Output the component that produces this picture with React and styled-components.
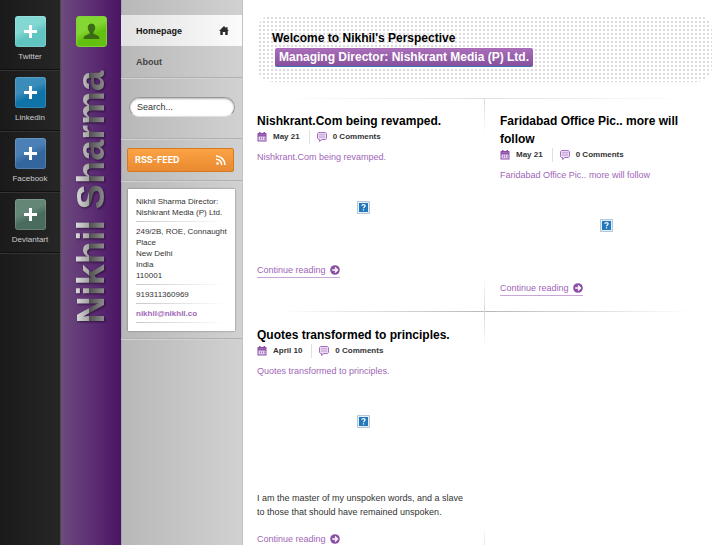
import styled, { createGlobalStyle } from 'styled-components'

const socialLinks = [
  { name: 'Twitter', from: '#83d8d4', to: '#60c4c0' },
  { name: 'Linkedin', from: '#3a8cba', to: '#0f73a8' },
  { name: 'Facebook', from: '#4a80b6', to: '#34669e' },
  { name: 'Deviantart', from: '#648676', to: '#4a6c5e' },
]

const posts = [
  { title: 'Nishkrant.Com being revamped.', date: 'May 21' },
  { title: 'Faridabad Office Pic.. more will follow', date: 'May 21' },
  {
    title: 'Quotes transformed to principles.',
    date: 'April 10',
    text: 'I am the master of my unspoken words, and a slave to those that should have remained unspoken.',
  },
]

export default function App() {
  return (
    <>
      <GlobalStyle />
      <Page>
        <SocialBar>
          {socialLinks.map((link) => (
            <SocialLink href="#" key={link.name}>
              <SocialTile $from={link.from} $to={link.to}>
                <PlusIcon />
              </SocialTile>
              {link.name}
            </SocialLink>
          ))}
        </SocialBar>

        <BrandBar>
          <UserButton type="button" aria-label="Profile">
            <UserIcon />
          </UserButton>
          <BrandName>Nikhil Sharma</BrandName>
        </BrandBar>

        <Sidebar>
          <Menu>
            <MenuLink href="#" $active>
              Homepage
              <HomeIcon />
            </MenuLink>
            <MenuLink href="#">About</MenuLink>
          </Menu>
          <SearchForm>
            <SearchInput
              type="text"
              aria-label="Search"
              defaultValue="Search..."
            />
          </SearchForm>
          <RssSection>
            <RssLink href="#">
              RSS-FEED
              <RssIcon />
            </RssLink>
          </RssSection>
          <ContactSection>
            <ContactCard>
              <ContactItem>
                Nikhil Sharma Director: Nishkrant Media (P) Ltd.
              </ContactItem>
              <ContactItem>
                249/2B, ROE, Connaught Place
                <br />
                New Delhi
                <br />
                India
                <br />
                110001
              </ContactItem>
              <ContactItem>919311360969</ContactItem>
              <ContactItem>
                <MailLink href="mailto:nikhil@nikhil.co">
                  nikhil@nikhil.co
                </MailLink>
              </ContactItem>
            </ContactCard>
          </ContactSection>
        </Sidebar>

        <Main>
          <Banner>
            <BannerTitle>Welcome to Nikhil's Perspective</BannerTitle>
            <BannerTag>Managing Director: Nishkrant Media (P) Ltd.</BannerTag>
          </Banner>
          <PostGrid>
            {posts.map((post) => (
              <Post key={post.title}>
                <PostTitle>{post.title}</PostTitle>
                <PostMeta>
                  <MetaItem>
                    <CalendarIcon />
                    {post.date}
                  </MetaItem>
                  <MetaItem>
                    <CommentIcon />0 Comments
                  </MetaItem>
                </PostMeta>
                <Excerpt href="#">{post.title}</Excerpt>
                <Picture>
                  <MissingImageIcon />
                </Picture>
                {post.text && <PostText>{post.text}</PostText>}
                <MoreLink href="#">
                  Continue reading
                  <ArrowIcon />
                </MoreLink>
              </Post>
            ))}
          </PostGrid>
        </Main>
      </Page>
    </>
  )
}

function PlusIcon() {
  return (
    <svg width="13" height="13" viewBox="0 0 13 13" aria-hidden="true">
      <path d="M5 0h3v5h5v3H8v5H5V8H0V5h5z" fill="#fff" />
    </svg>
  )
}

function UserIcon() {
  return (
    <svg width="17" height="17" viewBox="0 0 17 17" aria-hidden="true">
      <path
        d="M8.500 1C6.200 1 5.200 2.500 5.200 4.500c0 1.800.7 3.500 1.800 4.400v1.500C6.500 12 1.500 12.200 1 14.500V15.500h15v-1c-.5-2.300-5.500-2.500-6-4.100V8.900c1.100-.9 1.800-2.600 1.800-4.400C11.800 2.500 10.800 1 8.500 1z"
        fill="#3d6b14"
        stroke="#2c5510"
        strokeWidth=".6"
      />
    </svg>
  )
}

function HomeIcon() {
  return (
    <svg width="10" height="9" viewBox="0 0 10 9" aria-hidden="true">
      <path
        d="M5 0 0 5h1.300v4h2.500V6h2.400v3h2.500V5H10L8.500 3.500V1H7.200v1.200z"
        fill="#2b2b2b"
      />
    </svg>
  )
}

function RssIcon() {
  return (
    <svg width="10" height="10" viewBox="0 0 10 10" aria-hidden="true">
      <circle cx="1.500" cy="8.500" r="1.300" fill="#fff" />
      <path
        d="M0 4.200A5.800 5.800 0 0 1 5.800 10M0 1a9 9 0 0 1 9 9"
        fill="none"
        stroke="#fff"
        strokeWidth="1.500"
      />
    </svg>
  )
}

function CalendarIcon() {
  return (
    <svg width="10" height="10" viewBox="0 0 10 10" aria-hidden="true">
      <path
        d="M1 1h1V0h1.500v1h3V0H8v1h1l.5.500V9.500h-9v-8z"
        fill="#8a4fa5"
      />
      <path d="M1.500 4.500h7v4h-7z" fill="#e6d5ef" />
      <path d="M3 5.500h1v2H3zM5 5.500h1v2H5zM7 5.500h.8v2H7z" fill="#a873c0" />
      <path d="M1.500 2.800h7" stroke="#b88acb" strokeWidth=".6" />
    </svg>
  )
}

function CommentIcon() {
  return (
    <svg width="10" height="10" viewBox="0 0 10 10" aria-hidden="true">
      <path
        d="M1.500.5h7l1 1v5l-1 1H5L2.500 9.500v-2h-1l-1-1v-5z"
        fill="#ead9f2"
        stroke="#a56fc0"
      />
      <path d="M2 2.800h6M2 5h6" stroke="#b58acb" strokeWidth=".8" />
    </svg>
  )
}

function ArrowIcon() {
  return (
    <svg width="10" height="10" viewBox="0 0 10 10" aria-hidden="true">
      <circle cx="5" cy="5" r="4.800" fill="#8a4fa5" />
      <path
        d="M2.200 5h4.800M5 2.600 7.400 5 5 7.400"
        fill="none"
        stroke="#fff"
        strokeWidth="1.400"
      />
    </svg>
  )
}

function MissingImageIcon() {
  return (
    <svg width="13" height="13" viewBox="0 0 13 13" role="img">
      <path d="M.5.500h12v12H.5z" fill="#e6eef6" stroke="#b4c6d8" />
      <path d="M2 2h9v9H2z" fill="#2279bd" />
      <path
        d="M4.800 4.800c0-1.600 3.400-1.600 3.400 0C8.200 6 6.500 5.800 6.500 7.300M6.500 8.300v1.200"
        fill="none"
        stroke="#fff"
        strokeWidth="1.200"
      />
    </svg>
  )
}

const purple = '#a066b8'

const GlobalStyle = createGlobalStyle`
  * {
    box-sizing: border-box;
  }
  body {
    margin: 0;
    background: #ffffff;
    color: #333333;
    font: 9px/14px 'Liberation Sans', Arial, sans-serif;
  }
  a {
    color: inherit;
    text-decoration: none;
  }
  svg {
    display: block;
    flex: none;
  }
`

const Page = styled.div`
  display: grid;
  grid-template-columns: 61px 60px 122px 1fr;
  min-height: 100vh;
`

const SocialBar = styled.nav`
  padding-top: 10px;
  background: linear-gradient(90deg, #1a1a1a, #262626);
  border-right: 1px solid #4a4a4a;
`

const SocialLink = styled.a`
  display: flex;
  flex-direction: column;
  align-items: center;
  height: 61px;
  padding-top: 6px;
  border-bottom: 1px solid #333333;
  box-shadow: inset 0 -1px 0 #101010;
  color: #cccccc;
  font-size: 8px;
  line-height: 20px;
`

const SocialTile = styled.span`
  display: grid;
  place-items: center;
  width: 31px;
  height: 31px;
  border-radius: 3px;
  background: linear-gradient(
    155deg,
    ${(props) => props.$from} 40%,
    ${(props) => props.$to} 60%
  );
  box-shadow: inset 0 0 0 1px rgba(255, 255, 255, 0.15);
`

const BrandBar = styled.header`
  display: flex;
  flex-direction: column;
  align-items: center;
  padding-top: 16px;
  background: linear-gradient(90deg, #6c4b7c, #5d2f74 50%, #4a1463);
`

const UserButton = styled.button`
  display: grid;
  place-items: center;
  width: 31px;
  height: 31px;
  margin-bottom: 23px;
  padding: 0;
  border: 1px solid #7fd13a;
  border-radius: 3px;
  background: linear-gradient(155deg, #84d632 40%, #64c00e 60%);
  cursor: pointer;
`

/* reads bottom to top, so the gradient runs right to left */
const BrandName = styled.div`
  writing-mode: vertical-rl;
  transform: rotate(180deg);
  background: linear-gradient(
    90deg,
    #949494 16%,
    #505050 54%,
    #a2a2a2 54%,
    #dcdcdc 85%
  );
  background-clip: text;
  color: transparent;
  filter: drop-shadow(-1px -1px 1px rgba(20, 0, 30, 0.6));
  font-size: 38px;
  font-weight: bold;
  line-height: 44px;
  white-space: nowrap;
`

const Sidebar = styled.aside`
  background: linear-gradient(90deg, #b8b8b8, #d1d1d1);
  border-right: 1px solid #c2c2c2;
  box-shadow: inset 1px 0 0 #a5a5a5;
`

const SideSection = styled.div`
  border-bottom: 1px solid #b0b0b0;
  box-shadow: 0 1px 0 #d2d2d2;
`

const Menu = styled(SideSection).attrs({ as: 'nav' })`
  padding-top: 15px;
`

const MenuLink = styled.a`
  display: flex;
  align-items: center;
  justify-content: space-between;
  height: 31px;
  padding: 0 13px 0 15px;
  background: ${(props) =>
    props.$active ? 'linear-gradient(90deg, #e2e2e2, #fbfbfb)' : 'none'};
  color: ${(props) => (props.$active ? '#111111' : '#444444')};
  font-weight: bold;
`

const SearchForm = styled(SideSection).attrs({ as: 'form' })`
  padding: 19px 7px 21px 8px;
`

const SearchInput = styled.input`
  display: block;
  width: 100%;
  height: 20px;
  padding: 0 7px;
  border: 1px solid #999999;
  border-bottom-color: #e0e0e0;
  border-radius: 10px;
  background: #ffffff;
  box-shadow: inset 0 1px 2px rgba(0, 0, 0, 0.3);
  color: #333333;
  font: inherit;
`

const RssSection = styled(SideSection)`
  padding: 9px 8px 8px 6px;
`

const RssLink = styled.a`
  display: flex;
  align-items: center;
  justify-content: space-between;
  height: 24px;
  padding: 0 7px;
  border: 1px solid #d27a24;
  border-radius: 2px;
  background: linear-gradient(#fba345, #e98a30);
  color: #ffffff;
  font-family: Inter, sans-serif;
  font-weight: bold;
`

const ContactSection = styled(SideSection)`
  padding: 8px 7px 7px;
`

const ContactCard = styled.address`
  padding: 7px 0 8px 8px;
  background: #ffffff;
  box-shadow: 0 0 2px rgba(0, 0, 0, 0.4);
  font-size: 8px;
  font-style: normal;
  line-height: 11px;
`

const ContactItem = styled.div`
  padding: 0 0 3px;
  margin-bottom: 4px;
  border-bottom: 1px solid;
  border-image: linear-gradient(90deg, #c8c8c8, #ffffff 90%) 1;

  &:last-child {
    margin-bottom: 0;
  }
`

const MailLink = styled.a`
  color: ${purple};
  font-weight: bold;
`

const Main = styled.main`
  min-width: 0;
`

const Banner = styled.section`
  margin: 15px 15px 16px 14px;
  padding: 14px 15px 15px;
  border-radius: 16px;
  background: conic-gradient(#ffffff 25%, #dcdadc 0 50%, #ffffff 0) 0 0 / 4px
    4px;
  font-size: 12px;
  font-weight: bold;
  line-height: 18px;
`

const BannerTitle = styled.h1`
  margin: 0 0 1px;
  color: #000000;
  font: inherit;
`

const BannerTag = styled.span`
  display: block;
  width: fit-content;
  margin-left: 3px;
  padding: 0 4px;
  border-bottom: 1px solid #3f72b0;
  border-radius: 2px;
  background: linear-gradient(#ab6fba, #86509c);
  color: #ffffff;
`

const PostGrid = styled.div`
  display: grid;
  grid-template-columns: 1fr 1fr;
`

/* hairlines fade out away from the corners where cells meet */
const Post = styled.article`
  padding: 14px 15px 16px 14px;
  background:
    linear-gradient(#d8d8d8, transparent) 100% 0 / 1px 36px no-repeat,
    linear-gradient(transparent, #d8d8d8) 100% 100% / 1px 36px no-repeat,
    linear-gradient(90deg, transparent 15%, #e0e0e0) 0 0 / 100% 1px no-repeat,
    linear-gradient(90deg, transparent 15%, #b8b8b8) 0 100% / 100% 1px no-repeat;

  &:nth-child(even) {
    padding-left: 15px;
    background:
      linear-gradient(90deg, #e0e0e0, transparent 85%) 0 0 / 100% 1px no-repeat,
      linear-gradient(90deg, #b8b8b8, transparent 85%) 0 100% / 100% 1px
        no-repeat;
  }
  &:nth-child(3) {
    padding-bottom: 0;
    background:
      linear-gradient(#d8d8d8, transparent) 100% 0 / 1px 36px no-repeat,
      linear-gradient(transparent, #e4e4e4) 100% 100% / 1px 20px no-repeat;
  }
`

const PostTitle = styled.h2`
  margin: 0;
  color: #000000;
  font-size: 12px;
  line-height: 18px;
`

const PostMeta = styled.div`
  display: flex;
  margin-bottom: 6px;
  font-size: 8px;
  font-weight: bold;
  line-height: 14px;
`

const MetaItem = styled.span`
  display: flex;
  align-items: center;
  gap: 6px;

  & + & {
    margin-left: 9px;
    padding-left: 7px;
    border-left: 1px solid #e0e0e0;
  }
`

const Excerpt = styled.a`
  display: block;
  color: ${purple};
`

const Picture = styled.div`
  display: flex;
  justify-content: center;
  padding: 37px 0 49px;
`

const PostText = styled.p`
  margin: 14px 0 13px;
`

const MoreLink = styled.a`
  display: inline-flex;
  align-items: center;
  gap: 4px;
  border-bottom: 1px solid #c9a6d8;
  color: ${purple};
`
